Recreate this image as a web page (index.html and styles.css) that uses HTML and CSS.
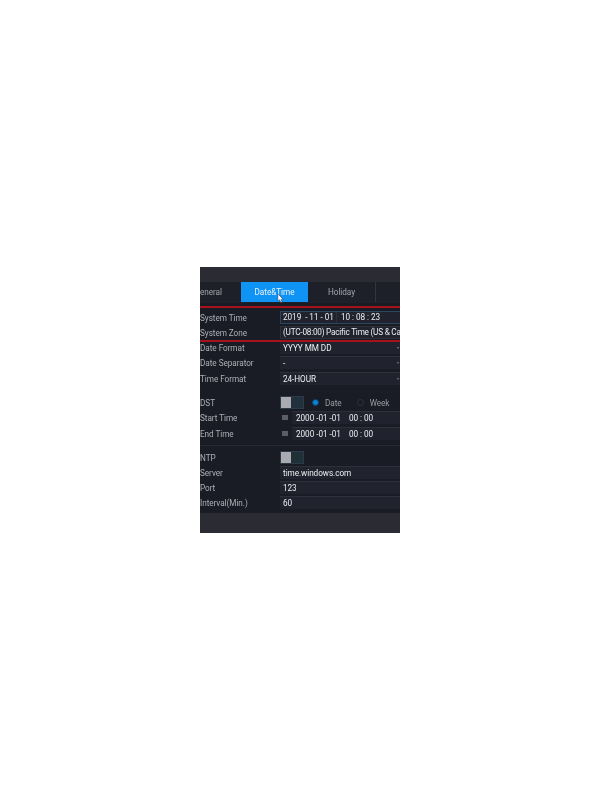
FILE: index.html
```html
<!DOCTYPE html>
<html lang="en">
<head>
<meta charset="utf-8">
<title>Date&amp;Time</title>
<link rel="stylesheet" href="styles.css">
</head>
<body>
<main class="panel">
  <div class="titlebar"></div>
  <nav class="tabs">
    <span class="tab tab-general">eneral</span>
    <span class="tab tab-active">Date&amp;Time</span>
    <span class="tab tab-holiday">Holiday</span>
    <span class="tab tab-empty"></span>
  </nav>
  <div class="content">
    <section class="group">
      <div class="row"><span class="label">System Time</span><div class="field field-time"><span class="date">2019 &nbsp;- 11 - 01</span><span class="clock">10 : 08 : 23</span></div></div>
      <div class="row"><span class="label">System Zone</span><div class="field field-zone">(UTC-08:00) Pacific Time (US &amp; Ca</div></div>
      <div class="row"><span class="label">Date Format</span><div class="field">YYYY MM DD<i class="caret"></i></div></div>
      <div class="row"><span class="label">Date Separator</span><div class="field">-<i class="caret"></i></div></div>
      <div class="row row-shift"><span class="label">Time Format</span><div class="field">24-HOUR<i class="caret"></i></div></div>
    </section>
    <section class="group group-dst">
      <div class="row"><span class="label">DST</span><div class="toggle"><i class="knob"></i></div><span class="radio radio-on"></span><span class="radio-label">Date</span><span class="radio radio-off"></span><span class="radio-label">Week</span></div>
      <div class="row"><span class="label">Start Time</span><i class="cal"></i><div class="field field-range"><span class="date">2000 -01 -01</span><span class="clock">00 : 00</span></div></div>
      <div class="row row-shift"><span class="label">End Time</span><i class="cal"></i><div class="field field-range"><span class="date">2000 -01 -01</span><span class="clock">00 : 00</span></div></div>
    </section>
    <section class="group group-ntp">
      <div class="row"><span class="label">NTP</span><div class="toggle toggle-ntp"><i class="knob"></i></div></div>
      <div class="row"><span class="label">Server</span><div class="field">time.windows.com</div></div>
      <div class="row"><span class="label">Port</span><div class="field">123</div></div>
      <div class="row"><span class="label">Interval(Min.)</span><div class="field">60</div></div>
    </section>
  </div>
  <div class="footer"></div>
  <i class="redline redline-top"></i>
  <i class="redline redline-bottom"></i>
  <svg class="cursor" viewBox="0 0 8 12" width="7" height="11"><path d="M1 0.5 L1 9 L3 7.4 L4.4 10.6 L5.8 10 L4.5 7 L7 7 Z" fill="#fff" stroke="#223" stroke-width="0.5"/></svg>
</main>
</body>
</html>
```
FILE: styles.css
```css
html, body { margin: 0; padding: 0; background: #fff; }
body { height: 800px; overflow: hidden; font-family: Roboto, "Noto Sans", sans-serif; }
.panel {
  position: relative;
  width: 200px;
  height: 266px;
  margin: 267px 0 0 200px;
  background: #191b25;
  overflow: hidden;
  display: flex;
  flex-direction: column;
  font-size: 8.2px;
  letter-spacing: -0.05px;
  color: #eceef2;
  filter: blur(0.25px);
}
.titlebar { height: 15px; background: #2b2c33; flex: none; }
.tabs { height: 21px; flex: none; display: flex; background: #1d1f29; }
.tab { height: 20px; line-height: 20px; text-align: center; color: #a4a6ad; border-right: 1px solid #33353d; }
.tab-general { width: 41px; text-align: left; border-right: 0; }
.tab-active { width: 67px; background: #0f93f5; color: #e8f3fb; border-right: 0; }
.tab-holiday { width: 67px; }
.tab-empty { flex: 1; border-right: 0; }
.content { flex: none; height: 210px; padding-top: 7px; box-sizing: border-box; display: flex; flex-direction: column; }
.group { display: flex; flex-direction: column; }
.group-dst { margin-top: 9px; padding-bottom: 4px; border-bottom: 1px solid #262832; }
.group-ntp { margin-top: 4px; }
.row { height: 15px; display: flex; align-items: center; }
.row-shift { margin-top: 1px; }
.label { width: 80px; flex: none; color: #adafb6; white-space: nowrap; }
.field {
  position: relative;
  flex: 1;
  height: 12px;
  line-height: 12px;
  padding-left: 3px;
  background: #20222d;
  border-top: 1px solid #2d303b;
  white-space: nowrap;
  overflow: hidden;
  display: flex;
}
.field-time { border: 1px solid #2b4560; border-right: 0; height: 11px; line-height: 11px; padding-left: 2px; }
.field-zone { border: 1px solid #2d303b; border-right: 0; height: 11px; line-height: 11px; padding-left: 2px; letter-spacing: -0.22px; }
.date { width: 53px; flex: none; }
.clock { padding-left: 4px; border-left: 1px solid #2d303b; }
.field-range { padding-left: 4px; }
.field-range .clock { border-left: 0; padding-left: 0; }
.caret { position: absolute; right: 1px; top: 5px; border: 1.5px solid transparent; border-top: 2px solid #80838b; border-bottom: 0; }
.toggle { width: 24px; height: 13px; background: #20303d; box-sizing: border-box; border: 1px solid #2d3a47; display: flex; flex: none; }
.toggle-ntp { background: #1f3036; }
.knob { width: 10px; height: 11px; background: #a9abb0; }
.radio { width: 7px; height: 7px; border-radius: 50%; flex: none; box-sizing: border-box; }
.radio-on { margin-left: 8px; background: #0f7fd8; border: 1.5px solid #0b3f68; }
.radio-off { margin-left: 15px; border: 1px solid #30323b; }
.radio-label { margin-left: 6px; color: #9a9ca3; }
.cal { width: 6px; height: 5px; margin-left: 2px; margin-right: 4px; background: #5a5d66; flex: none; }
.footer { flex: 1; background: #2b2c33; }
.redline { position: absolute; left: 0; right: 0; height: 2px; background: #a5121b; }
.redline-top { top: 39px; }
.redline-bottom { top: 73px; }
.cursor { position: absolute; left: 77px; top: 26px; }
```
